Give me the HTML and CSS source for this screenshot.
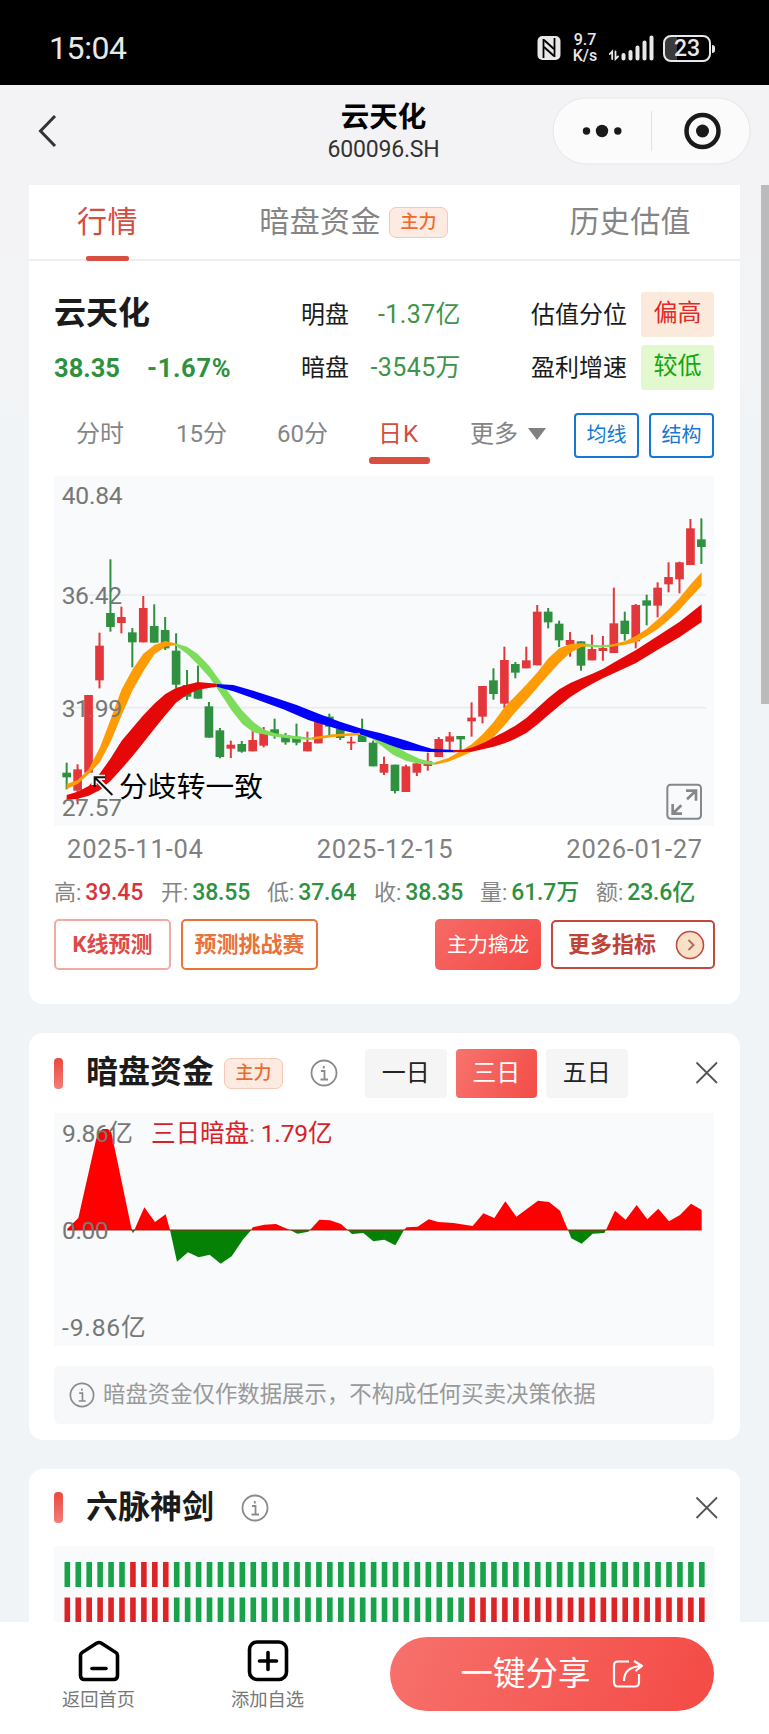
FILE: index.html
```html
<!DOCTYPE html>
<html lang="zh-CN">
<head>
    <meta charset="UTF-8">
    <meta name="viewport" content="width=device-width, initial-scale=1.0">
    <title>云天化 600096.SH</title>
    <link rel="stylesheet" href="styles.css">
</head>
<body>

    <div class="statusbar">
        <span class="clock">15:04</span>
        <svg class="nfc" width="24" height="24" viewBox="0 0 24 24">
            <rect x="0.5" y="0" width="23" height="24" rx="5" fill="#e8e8e8"/>
            <path d="M6.5 22V3M17.5 21V2" fill="none" stroke="#000" stroke-width="1.8"/>
            <path d="M7 4L17 13M7 11L17 20" fill="none" stroke="#000" stroke-width="2"/>
        </svg>
        <div class="speed"><div>9.7</div><div>K/s</div></div>
        <svg class="signal" width="45" height="26" viewBox="0 0 45 26">
            <g stroke="#e8e8e8" stroke-linecap="round" fill="none">
                <path d="M0.8 19L3.2 16.5V24M6.5 16.5V24L9 21.5" stroke-width="1.8"/>
                <path d="M14.5 20V23.5M21.5 17V23.5M28.5 12.5V23.5M35.5 7.5V23.5M42.5 2.5V23.5" stroke-width="4"/>
            </g>
        </svg>
        <div class="battery"><span>23</span></div>
    </div>

    <header>
        <svg class="back" width="20" height="36" viewBox="0 0 20 36">
            <path d="M18 3L3.500 18L18 33" fill="none" stroke="#333" stroke-width="3"/>
        </svg>
        <div class="title">
            <h1>云天化</h1>
            <p>600096.SH</p>
        </div>
        <svg class="capsule" width="199" height="68" viewBox="0 0 199 68">
            <rect x="1" y="1" width="197" height="66" rx="33" fill="#fbfbfc" stroke="#e6e6e8"/>
            <circle cx="34.5" cy="34" r="3.7" fill="#1a1a1c"/>
            <circle cx="50" cy="34" r="6.2" fill="#1a1a1c"/>
            <circle cx="65.8" cy="34" r="3.7" fill="#1a1a1c"/>
            <path d="M99.5 14V54" stroke="#e2e2e4"/>
            <circle cx="150.5" cy="34" r="16" fill="none" stroke="#1a1a1c" stroke-width="4.5"/>
            <circle cx="150.5" cy="34" r="6.5" fill="#1a1a1c"/>
        </svg>
    </header>

    <main>
        <section class="card quote">
            <nav>
                <a class="tab on" href="#">行情</a>
                <a class="tab" href="#">暗盘资金<span class="badge">主力</span></a>
                <a class="tab" href="#">历史估值</a>
            </nav>

            <div class="inner">
                <div class="summary">
                    <h2>云天化</h2>
                    <span class="label">明盘</span><span class="num">-1.37亿</span>
                    <span class="label">估值分位</span><span class="tag high">偏高</span>
                    <p class="price"><span>38.35</span><span class="rate">-1.67%</span></p>
                    <span class="label">暗盘</span><span class="num">-3545万</span>
                    <span class="label">盈利增速</span><span class="tag low">较低</span>
                </div>

                <div class="periods">
                    <a href="#">分时</a>
                    <a href="#">15分</a>
                    <a href="#">60分</a>
                    <a class="on" href="#">日K</a>
                    <a href="#">更多<i class="arrow"></i></a>
                    <button class="line">均线</button>
                    <button class="line">结构</button>
                </div>

                <svg class="kline" width="660" height="350" viewBox="0 0 1980 1050">
                    <g transform="translate(-12,-18)">
                        <path d="M50 375H1968M50 713H1968" stroke="#eaecee" stroke-width="5"/>
                        <g id="candles"></g>
                        <!-- bandas de tendencia -->
                        <polygon fill="#7ddc5a" points="375,520 411,530 444,553 478,588 511,634 544,678 577,722 610,756 640,778 675,790 740,799 785,803 785,809 740,808 675,800 640,793 610,787 577,762 544,720 511,670 478,622 444,584 411,551 375,526"/>
                        <polygon fill="#7ddc5a" points="930,788 965,795 990,806 1030,825 1070,848 1110,867 1155,878 1155,884 1110,882 1070,873 1030,855 990,824 965,806 930,795"/>
                        <polygon fill="#0202fa" points="500,642 550,645 610,662 675,683 740,705 808,732 870,755 935,776 990,789 1070,812 1110,826 1145,836 1213,840 1213,847 1135,846 1060,839 1020,825 990,813 935,794 870,779 775,750 700,718 630,692 550,664 500,650"/>
                        <polygon fill="#ff9c05" points="50,942 83,930 116,898 150,832 182,748 215,658 248,598 280,551 313,525 346,513 375,520 375,526 346,530 313,553 280,604 248,660 215,735 182,815 150,876 116,912 83,942 50,957"/>
                        <polygon fill="#ff9c05" points="785,802 850,793 930,788 930,795 850,801 785,809"/>
                        <polygon fill="#ff9c05" points="1155,877 1195,864 1232,843 1265,823 1298,793 1331,756 1364,711 1396,678 1430,643 1463,606 1495,565 1528,535 1561,522 1594,520 1620,522 1620,529 1594,531 1561,548 1528,579 1495,615 1463,652 1430,690 1396,726 1364,766 1331,801 1298,830 1265,845 1232,860 1195,875 1155,884"/>
                        <path d="M1608 525Q1645 532 1682 527" fill="none" stroke="#7ddc5a" stroke-width="7"/>
                        <polygon fill="#ff9c05" points="1680,524 1726,514 1758,497 1790,477 1822,449 1855,419 1888,385 1921,344 1955,307 1955,347 1921,383 1888,420 1855,451 1822,478 1790,498 1758,516 1726,524 1680,531"/>
                        <polygon fill="#e50808" points="50,975 83,965 116,948 150,910 182,865 215,812 248,773 280,736 313,701 346,672 378,654 411,644 444,636 500,641 500,650 444,659 411,674 378,698 346,736 313,776 280,818 248,858 215,896 182,932 150,960 116,977 83,986 50,990"/>
                        <polygon fill="#e50808" points="1210,840 1242,839 1270,831 1308,815 1331,802 1364,785 1396,767 1430,743 1463,713 1495,684 1528,658 1561,639 1594,625 1627,611 1660,596 1693,577 1758,540 1822,499 1888,456 1955,403 1955,456 1888,502 1822,540 1758,579 1693,609 1660,624 1627,641 1594,660 1561,681 1528,707 1495,735 1463,763 1430,788 1396,806 1364,820 1331,830 1298,838 1265,845 1210,847"/>
                        <g class="axis">
                            <text x="35" y="102" textLength="183">40.84</text>
                            <text x="35" y="403" textLength="181">36.42</text>
                            <text x="35" y="740" textLength="181">31.99</text>
                            <text x="35" y="1039" textLength="181">27.57</text>
                        </g>
                        <path d="M187 975L136 923M132 945V922H165" fill="none" stroke="#fff" stroke-width="16"/>
                        <path d="M187 975L136 924M134 950V922H166" fill="none" stroke="#111" stroke-width="6"/>
                        <text class="note" x="207" y="980" textLength="432">分歧转一致</text>
                        <g fill="none" stroke="#85888a" stroke-width="6">
                            <rect x="1852" y="944" width="101" height="102" rx="10"/>
                            <path d="M1908 962H1938V992M1936 964L1911 988M1868 1002V1031H1896M1870 1029L1894 1006" stroke-width="8"/>
                        </g>
                    </g>
                </svg>

                <div class="dates">
                    <span>2025-11-04</span><span>2025-12-15</span><span>2026-01-27</span>
                </div>

                <div class="ohlc">
                    <span>高:<b class="up">39.45</b></span>
                    <span>开:<b>38.55</b></span>
                    <span>低:<b>37.64</b></span>
                    <span>收:<b>38.35</b></span>
                    <span>量:<b>61.7万</b></span>
                    <span>额:<b>23.6亿</b></span>
                </div>

                <div class="actions">
                    <button class="predict">K线预测</button>
                    <button class="contest">预测挑战赛</button>
                    <button class="dragon">主力擒龙</button>
                    <button class="more">更多指标
                        <svg width="30" height="30" viewBox="0 0 30 30">
                            <circle cx="15" cy="15" r="13.5" fill="#fbe0c8" stroke="#c04a3e" stroke-width="1.6"/>
                            <path d="M13.5 10L18.5 15L13.5 20" fill="none" stroke="#a8755c" stroke-width="2"/>
                        </svg>
                    </button>
                </div>
            </div>
        </section>

        <section class="card flow">
            <div class="head">
                <i class="mark"></i>
                <h3>暗盘资金</h3>
                <span class="badge">主力</span>
                <svg class="info" width="28" height="28" viewBox="0 0 28 28">
                    <circle cx="14" cy="14" r="12.5"/>
                    <path d="M11 12H14.5V20M10.5 20.5H18M13.8 7V9.4"/>
                </svg>
                <div class="days">
                    <button>一日</button>
                    <button class="on">三日</button>
                    <button>五日</button>
                </div>
                <svg class="close" width="24" height="24" viewBox="0 0 24 24"><path d="M1.5 1.5L22 22M22 1.5L1.5 22"/></svg>
            </div>

            <svg class="area" width="660" height="233" viewBox="0 0 1980 699">
                <g transform="translate(-12,-10)">
                    <g fill="#fe0000">
                        <polygon points="52,361 52,357 85,325 138,90 145,68 158,58 174,58 184,68 243,350 246,361"/>
                        <polygon points="253,361 283,293 315,337 347,314 360,361"/>
                        <polygon points="604,361 608,353 643,345 678,343 700,353 720,361"/>
                        <polygon points="780,361 808,330 840,332 873,343 893,361"/>
                        <polygon points="1062,361 1070,353 1103,351 1136,329 1165,337 1210,340 1268,349 1300,311 1333,325 1366,275 1399,321 1464,273 1497,277 1530,303 1545,340 1554,361"/>
                        <polygon points="1668,361 1680,335 1695,303 1727,330 1760,286 1792,329 1825,297 1857,335 1890,316 1923,282 1955,301 1955,361"/>
                    </g>
                    <g fill="#058205">
                        <polygon points="244,361 249,371 255,361"/>
                        <polygon points="360,361 381,456 414,428 446,443 479,435 512,462 545,440 580,388 604,361"/>
                        <polygon points="720,361 742,372 775,366 780,361"/>
                        <polygon points="893,361 906,373 940,370 970,395 1003,390 1036,407 1062,361"/>
                        <polygon points="1554,361 1564,386 1595,402 1628,372 1663,370 1668,361"/>
                    </g>
                    <path d="M52 361H1955" stroke="#a5201c" stroke-width="3"/>
                    <g class="axis">
                        <text x="36" y="96" textLength="213">9.86亿</text>
                        <text x="36" y="387" textLength="140">0.00</text>
                        <text x="36" y="680" textLength="251">-9.86亿</text>
                    </g>
                    <text class="legend" x="303" y="96" textLength="545">三日暗盘<tspan fill="#888">:</tspan> 1.79亿</text>
                </g>
            </svg>

            <p class="notice">
                <svg class="info" width="26" height="26" viewBox="0 0 28 28">
                    <circle cx="14" cy="14" r="12.5"/>
                    <path d="M11 12H14.5V20M10.5 20.5H18M13.8 7V9.4"/>
                </svg>
                <span>暗盘资金仅作数据展示，不构成任何买卖决策依据</span>
            </p>
        </section>

        <section class="card pulse">
            <div class="head">
                <i class="mark"></i>
                <h3>六脉神剑</h3>
                <svg class="info" width="28" height="28" viewBox="0 0 28 28">
                    <circle cx="14" cy="14" r="12.5"/>
                    <path d="M11 12H14.5V20M10.5 20.5H18M13.8 7V9.4"/>
                </svg>
                <svg class="close" width="24" height="24" viewBox="0 0 24 24"><path d="M1.5 1.5L22 22M22 1.5L1.5 22"/></svg>
            </div>
            <svg class="sticks" id="sticks" width="660" height="100" viewBox="0 0 660 100"></svg>
        </section>
    </main>

    <footer>
        <a href="#">
            <svg width="42" height="42" viewBox="0 0 42 42">
                <path d="M2.5 15.5Q2.5 13.8 4 12.6L18.5 3.2Q21 1.8 23.5 3.2L38 12.6Q39.5 13.8 39.5 15.5V35.5Q39.5 39.5 35.5 39.5H6.5Q2.5 39.5 2.5 35.5Z"/>
                <path d="M14 28.5H28"/>
            </svg>
            返回首页
        </a>
        <a href="#">
            <svg width="42" height="42" viewBox="0 0 42 42">
                <rect x="2.5" y="2" width="37" height="37.5" rx="7.5"/>
                <path d="M12.5 21H29.5M21 12.5V29.5"/>
            </svg>
            添加自选
        </a>
        <button class="share">一键分享
            <svg width="32" height="30" viewBox="0 0 32 30">
                <path d="M17 2.5H6Q2 2.5 2 6.5V23Q2 27.5 6 27.5H23Q27 27.5 27 23V15"/>
                <path d="M12 22Q12 8 29 7M22 2L30 7L23.5 12"/>
            </svg>
        </button>
    </footer>

    <div class="scrollbar"></div>

    <script src="script.js"></script>
</body>
</html>
```
FILE: styles.css
```css
* {
    box-sizing: border-box;
}

body {
    margin: 0;
    height: 1734px;
    display: flex;
    flex-direction: column;
    overflow: hidden;
    position: relative;
    background: linear-gradient(#f3f3f5 0, #f3f3f5 240px, #f1f4f6 420px);
    font-family: Roboto, "Noto Sans CJK SC", sans-serif;
    color: #1b1b1b;
}

h1, h2, h3, p {
    margin: 0;
}

a {
    color: inherit;
    text-decoration: none;
}

button {
    font-family: inherit;
    padding: 0;
    border: 0;
    background: none;
    white-space: nowrap;
}

svg {
    display: block;
    flex: none;
}

/* Barra de estado */
.statusbar {
    flex: none;
    height: 85px;
    padding: 11px 53px 0 49px;
    background: #000;
    color: #e8e8e8;
    display: flex;
    align-items: center;
}

.clock {
    font-size: 32px;
    letter-spacing: -0.4px;
    margin-right: auto;
}

.speed {
    width: 28px;
    margin: 0 10px;
    font-size: 16px;
    line-height: 16px;
    font-weight: 500;
    text-align: center;
}

.battery {
    position: relative;
    width: 48px;
    height: 27px;
    margin-left: 9px;
    margin-right: 5px;
    border: 2px solid #e8e8e8;
    border-radius: 8px;
    background: linear-gradient(90deg, #3a3a3a 12px, #000 12px);
    font-size: 23px;
    line-height: 24px;
    font-weight: 500;
    text-align: center;
}

.battery::after {
    content: "";
    position: absolute;
    right: -6px;
    top: 8px;
    width: 3px;
    height: 8px;
    border-radius: 0 3px 3px 0;
    background: #e8e8e8;
}

/* Cabecera */
header {
    flex: none;
    height: 100px;
    padding: 0 18px 8px 37px;
    display: grid;
    grid-template-columns: 199px 1fr 199px;
    align-items: center;
}

.title {
    text-align: center;
    padding: 2px 19px 0 0;
    margin-left: -2px;
}

.title h1 {
    font-size: 28.500px;
    line-height: 34px;
    color: #000;
}

.title p {
    font-size: 23px;
    line-height: 29px;
    letter-spacing: -0.2px;
    color: #333;
}

main {
    flex: 1;
    min-height: 0;
    overflow: hidden;
    padding: 0 29px;
}

.card {
    background: #fff;
    border-radius: 14px;
    margin-bottom: 29px;
}

.quote {
    height: 819px;
    border-radius: 0 0 14px 14px;
}

nav {
    height: 76px;
    border-bottom: 2px solid #eeeeef;
    padding: 0 49px 0 48px;
    display: flex;
    justify-content: space-between;
}

.tab {
    position: relative;
    height: 76px;
    padding-top: 14px;
    display: flex;
    align-items: flex-start;
    font-size: 30px;
    line-height: 46px;
    letter-spacing: 0.4px;
    color: #858585;
}

.tab.on {
    color: #d44d40;
}

.tab.on::after {
    content: "";
    position: absolute;
    left: 9px;
    bottom: 0;
    width: 43px;
    height: 5px;
    border-radius: 2px;
    background: #d84f42;
}

.badge {
    width: 59px;
    height: 31px;
    border: 1px solid #f5c9b5;
    border-radius: 7px;
    background: #fdeae0;
    color: #f0682c;
    font-size: 18px;
    line-height: 28px;
    font-weight: 500;
    letter-spacing: 0;
    text-align: center;
}

.tab .badge {
    margin: 8px 0 0 8px;
}

.inner {
    padding: 31px 25px 0;
}

.summary {
    display: grid;
    grid-template-columns: 247px 49px 111px 70px 110px 73px;
    grid-template-rows: 45px 45px;
    row-gap: 8px;
    align-items: center;
    font-size: 24px;
    white-space: nowrap;
}

.summary > .label {
    padding-bottom: 5px;
}

.summary > .num + .label {
    grid-column: 5;
}

.summary h2 {
    font-size: 32px;
    line-height: 40px;
    padding-bottom: 3px;
}

.price {
    display: flex;
    gap: 27px;
    font-size: 25.500px;
    font-weight: bold;
    color: #2f913f;
}

.rate {
    letter-spacing: 0.7px;
}

.num {
    text-align: right;
    font-size: 25px;
    letter-spacing: 0.4px;
    padding-bottom: 5px;
    color: #3e9448;
}

.tag {
    height: 45px;
    line-height: 43px;
    border-radius: 3px;
    text-align: center;
}

.high {
    background: #fbeadc;
    color: #e32626;
}

.low {
    background: #e2f9d0;
    color: #12a80f;
}

.periods {
    height: 86px;
    display: grid;
    grid-template-columns: 93px 103px 101px 81px 142px 65px 65px;
    align-items: center;
    font-size: 24px;
    color: #858585;
    padding-top: 4px;
}

.periods a {
    height: 58px;
    line-height: 57px;
    padding-left: 22px;
    white-space: nowrap;
}

.periods a:nth-child(2) {
    padding-left: 29px;
}

.periods a:nth-child(3) {
    padding-left: 27px;
}

.periods .on {
    position: relative;
    padding-left: 27px;
    letter-spacing: 1px;
    color: #d44d40;
}

.periods .on::after {
    content: "";
    position: absolute;
    left: 18px;
    bottom: 0;
    width: 61px;
    height: 7px;
    border-radius: 3px;
    background: #d84f42;
}

.periods a:nth-child(5) {
    padding-left: 38px;
}

.arrow {
    display: inline-block;
    margin-left: 10px;
    border: 9px solid transparent;
    border-top: 12px solid #808080;
    border-bottom: 0;
    vertical-align: 2px;
}

.line {
    height: 45px;
    border: 2px solid #1478d4;
    border-radius: 4px;
    color: #1478d4;
    font-size: 20px;
    line-height: 36px;
}

.line:last-child {
    margin-left: 10px;
    width: 65px;
}

.kline, .area, .sticks {
    background: #f8fafb;
}

.axis {
    font-size: 74px;
    fill: #777;
}

.note {
    font-size: 86px;
    fill: #000;
}

.legend {
    font-size: 74px;
    fill: #d81f28;
}

.dates {
    height: 46px;
    padding: 0 12px 0 13px;
    display: flex;
    justify-content: space-between;
    align-items: center;
    font-size: 25.500px;
    letter-spacing: 0.8px;
    color: #808080;
}

.ohlc {
    height: 35px;
    display: grid;
    grid-template-columns: 107px 106px 107px 106px 116px 100px;
    align-items: center;
    font-size: 22px;
    color: #858585;
    white-space: nowrap;
}

.ohlc b {
    margin-left: 4px;
    font-size: 23px;
    font-weight: 500;
    letter-spacing: -0.2px;
    color: #2f913f;
}

.ohlc .up {
    color: #d8343a;
}

.actions {
    display: flex;
    align-items: center;
    margin-top: 12px;
}

.actions button {
    height: 51px;
    border-radius: 5px;
    font-size: 22px;
    line-height: 44px;
    font-weight: bold;
}

.actions .predict {
    width: 117px;
    border: 2px solid #f2aaa4;
    color: #dd4a48;
}

.actions .contest {
    width: 137px;
    margin-left: 10px;
    border: 2px solid #e8743c;
    color: #e9713a;
}

.actions .dragon {
    width: 106px;
    margin-left: auto;
    background: linear-gradient(135deg, #f66a66, #f34a46);
    color: #fff;
    font-size: 20.500px;
    font-weight: normal;
}

.actions .more {
    width: 164px;
    height: 49px;
    margin-left: 10px;
    border: 2px solid #c04a3e;
    color: #bf4337;
    display: flex;
    align-items: center;
    justify-content: space-between;
    padding: 0 8px 0 15px;
}

/* Tarjetas inferiores */
.flow {
    height: 407px;
    padding: 0 25px;
}

.head {
    height: 80px;
    display: flex;
    align-items: center;
}

.mark {
    width: 9px;
    height: 31px;
    border-radius: 4px;
    background: linear-gradient(#e9493f, #f27d76);
}

.head h3 {
    margin-left: 23px;
    font-size: 32px;
    line-height: 40px;
    padding-bottom: 2px;
    white-space: nowrap;
}

.head .badge {
    margin-left: 10px;
}

.info {
    fill: none;
    stroke: #8a8a8a;
    stroke-width: 1.8;
}

.head .info {
    margin-left: 27px;
}

.days {
    display: flex;
    gap: 9px;
    margin-left: 27px;
}

.days button {
    width: 81.500px;
    height: 49px;
    border-radius: 4px;
    background: #f5f5f6;
    font-size: 24px;
    line-height: 46px;
    color: #222;
}

.days .on {
    background: linear-gradient(110deg, #f7736d, #f34d47);
    color: #fff;
}

.close {
    margin-left: auto;
    margin-right: -4px;
    stroke: #555;
    stroke-width: 1.8;
}

.notice {
    height: 58px;
    width: 660px;
    margin-top: 20px;
    padding-left: 15px;
    display: flex;
    align-items: center;
    gap: 8px;
    border-radius: 6px;
    background: #f6f8f9;
    font-size: 22.400px;
    color: #999;
    white-space: nowrap;
}

.notice span {
    padding-bottom: 6px;
}

.pulse {
    padding: 0 25px;
}

.pulse .head {
    height: 77px;
}

footer {
    flex: none;
    height: 112px;
    padding: 15px 53px 0 61px;
    background: #fff;
    display: flex;
    align-items: flex-start;
}

footer a {
    width: 75px;
    margin-right: 94px;
    padding-top: 3px;
    display: flex;
    flex-direction: column;
    align-items: center;
    gap: 4px;
    font-size: 18.300px;
    line-height: 28px;
    color: #777;
    white-space: nowrap;
}

footer a svg {
    fill: none;
    stroke: #000;
    stroke-width: 3.6;
    stroke-linecap: round;
}

footer a + a {
    margin-right: 85px;
}

.share {
    width: 324px;
    height: 74px;
    border-radius: 37px;
    background: linear-gradient(110deg, #f7716c, #f44a45);
    color: #fff;
    font-size: 32.500px;
    line-height: 66px;
    display: flex;
    align-items: center;
    justify-content: center;
    gap: 21px;
}

.share svg {
    fill: none;
    stroke: #fff;
    stroke-width: 2.2;
    stroke-linejoin: round;
}

.scrollbar {
    position: absolute;
    right: 0;
    top: 185px;
    width: 8px;
    height: 519px;
    background: #bbbbbc;
}
```
FILE: script.js
```javascript
var NS = "http://www.w3.org/2000/svg";

function rect(parent, x, y, w, h, color) {
    var r = document.createElementNS(NS, "rect");
    r.setAttribute("x", x);
    r.setAttribute("y", y);
    r.setAttribute("width", w);
    r.setAttribute("height", h);
    r.setAttribute("fill", color);
    parent.appendChild(r);
}

// [high, body top, body bottom, low, 1 = up]
var candles = [
    [878, 908, 922, 958, 0], [883, 898, 962, 1003, 1], [675, 675, 908, 908, 1], [488, 527, 631, 655, 1],
    [268, 429, 471, 485, 0], [410, 441, 459, 490, 1], [474, 487, 517, 592, 0], [378, 414, 517, 517, 1],
    [403, 468, 518, 518, 0], [441, 480, 535, 540, 0], [490, 542, 644, 655, 0], [600, 645, 680, 690, 0],
    [587, 645, 686, 686, 0], [696, 709, 803, 803, 0], [774, 781, 861, 865, 0], [812, 824, 836, 864, 1],
    [813, 822, 845, 848, 0], [783, 810, 844, 844, 1], [771, 787, 827, 832, 1], [746, 778, 795, 806, 0],
    [789, 795, 817, 824, 0], [761, 800, 818, 826, 0], [785, 816, 844, 844, 1], [750, 752, 820, 820, 1],
    [731, 740, 770, 795, 0], [770, 776, 804, 810, 0], [800, 815, 820, 840, 1], [746, 790, 816, 816, 0],
    [812, 818, 889, 889, 0], [860, 882, 908, 915, 1], [884, 884, 963, 970, 0], [884, 889, 966, 966, 1],
    [867, 880, 908, 918, 1], [848, 874, 888, 902, 1], [801, 807, 861, 861, 1], [786, 799, 815, 840, 1],
    [798, 798, 808, 845, 0], [697, 743, 754, 800, 1], [648, 648, 740, 760, 1], [595, 631, 672, 689, 0],
    [530, 570, 701, 714, 1], [576, 582, 608, 625, 0], [530, 571, 595, 595, 1], [405, 425, 586, 586, 1],
    [414, 425, 457, 475, 0], [452, 461, 511, 531, 0], [486, 510, 525, 560, 1], [514, 514, 587, 602, 0],
    [494, 537, 571, 571, 1], [498, 534, 543, 572, 1], [353, 460, 549, 549, 1], [425, 452, 492, 512, 0],
    [402, 405, 514, 535, 1], [374, 391, 407, 466, 0], [337, 353, 407, 442, 1], [277, 321, 343, 367, 1],
    [275, 277, 328, 370, 1], [147, 175, 285, 285, 1], [145, 208, 231, 282, 0]
];

var box = document.getElementById("candles");
candles.forEach(function (c, i) {
    var x = 50 + i * 32.83;
    var color = c[4] ? "#e4373b" : "#2f913f";
    rect(box, x - 3, c[0], 6, c[3] - c[0], color);
    rect(box, x - 13, c[1], 26, c[2] - c[1], color);
});

var sticks = document.getElementById("sticks");
for (var i = 0; i < 59; i++) {
    var x = 10.5 + i * 10.94;
    rect(sticks, x, 16, 5.6, 25, i > 5 && i < 10 ? "#dc2326" : "#18a249");
    rect(sticks, x, 51.500, 5.6, 25, i < 10 || i > 36 ? "#dc2326" : "#18a249");
}
```
